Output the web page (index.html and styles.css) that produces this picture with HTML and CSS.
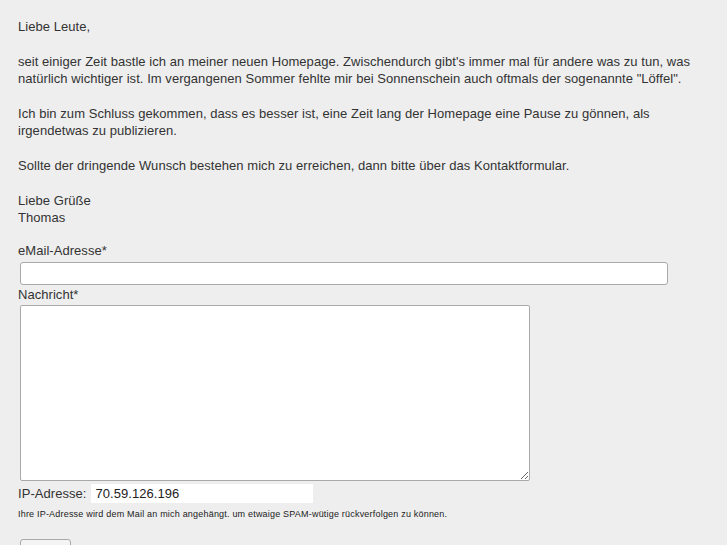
FILE: index.html
```html
<!DOCTYPE html>
<html lang="de">
<head>
<meta charset="utf-8">
<title>Kontakt</title>
<link rel="stylesheet" href="styles.css">
</head>
<body>
<div class="page">
  <p>Liebe Leute,</p>
  <p>seit einiger Zeit bastle ich an meiner neuen Homepage. Zwischendurch gibt's immer mal für andere was zu tun, was natürlich wichtiger ist. Im vergangenen Sommer fehlte mir bei Sonnenschein auch oftmals der sogenannte "Löffel".</p>
  <p>Ich bin zum Schluss gekommen, dass es besser ist, eine Zeit lang der Homepage eine Pause zu gönnen, als irgendetwas zu publizieren.</p>
  <p>Sollte der dringende Wunsch bestehen mich zu erreichen, dann bitte über das Kontaktformular.</p>
  <p class="last">Liebe Grüße<br>Thomas</p>
  <form class="form">
    <label class="label" for="email">eMail-Adresse*</label>
    <input class="email" id="email" type="text">
    <label class="label label-msg" for="msg">Nachricht*</label>
    <textarea class="msg" id="msg"></textarea>
    <div class="iprow">
      <span class="iplabel">IP-Adresse:</span>
      <span class="ipbox">70.59.126.196</span>
    </div>
    <div class="note">Ihre IP-Adresse wird dem Mail an mich angehängt. um etwaige SPAM-wütige rückverfolgen zu können.</div>
    <button class="send" type="button">Senden</button>
  </form>
</div>
</body>
</html>
```
FILE: styles.css
```css
html, body {
  margin: 0;
  padding: 0;
  background: #eeeeee;
}
.page {
  width: 692px;
  padding: 18px 0 0 18px;
  font-family: "Liberation Sans", Arial, sans-serif;
  font-size: 13px;
  letter-spacing: 0.05px;
  line-height: 17px;
  color: #333333;
}
.page p {
  margin: 0 0 18px 0;
}
.page p.last {
  margin-bottom: 16px;
}
.form {
  display: flex;
  flex-direction: column;
  align-items: flex-start;
}
.label {
  display: block;
  margin-bottom: 3px;
}
.label-msg {
  margin-bottom: 2px;
}
.email {
  box-sizing: border-box;
  width: 648px;
  height: 23px;
  margin: 0 0 1px 2px;
  border: 1px solid #a9a9a9;
  border-radius: 3px;
  background: #fff;
}
.msg {
  box-sizing: border-box;
  width: 510px;
  height: 176px;
  margin: 0 0 2px 2px;
  border: 1px solid #a9a9a9;
  border-radius: 2px;
  background: #fff;
  resize: both;
}
.iprow {
  display: flex;
  align-items: center;
  gap: 5px;
  height: 20px;
}
.iplabel {
  display: block;
}
.ipbox {
  display: block;
  width: 218px;
  height: 19px;
  line-height: 19px;
  padding-left: 4px;
  background: #fff;
  color: #222;
}
.note {
  margin-top: 5px;
  font-size: 9px;
  letter-spacing: 0.2px;
  line-height: 12px;
  color: #222;
}
.send {
  margin: 19px 0 0 2px;
  width: 51px;
  height: 24px;
  font-family: "Liberation Sans", Arial, sans-serif;
  font-size: 13px;
  border: 1px solid #a9a9a9;
  border-radius: 3px;
  background: #f4f4f4;
  color: #333;
}
```
